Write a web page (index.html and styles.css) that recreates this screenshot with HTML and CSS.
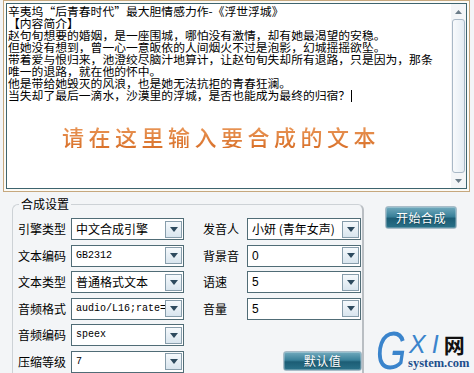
FILE: index.html
```html
<!DOCTYPE html>
<html lang="zh-CN">
<head>
<meta charset="utf-8">
<link rel="stylesheet" href="styles.css">
</head>
<body>
<div class="frame">
  <div class="editor">
    <div class="text">
      <div>辛夷坞“后青春时代”最大胆情感力作-《浮世浮城》</div>
      <div>【内容简介】</div>
      <div>赵句旬想要的婚姻，是一座围城，哪怕没有激情，却有她最渴望的安稳。</div>
      <div>但她没有想到，曾一心一意皈依的人间烟火不过是泡影，幻城摇摇欲坠。</div>
      <div>带着爱与恨归来，池澄绞尽脑汁地算计，让赵句旬失却所有退路，只是因为，那条</div>
      <div>唯一的退路，就在他的怀中。</div>
      <div>他是带给她毁灭的风浪，也是她无法抗拒的青春狂澜。</div>
      <div>当失却了最后一滴水，沙漠里的浮城，是否也能成为最终的归宿？<span class="caret"></span></div>
      <div class="hint">请在这里输入要合成的文本</div>
    </div>
    <div class="scroll">
      <div class="sb-btn"><svg width="7" height="4" viewBox="0 0 7 4"><path d="M0 4L3.5 0L7 4Z" fill="#6b7c88"/></svg></div>
      <div class="sb-thumb"></div>
      <div class="sb-btn"><svg width="7" height="4" viewBox="0 0 7 4"><path d="M0 0L3.5 4L7 0Z" fill="#6b7c88"/></svg></div>
    </div>
  </div>
</div>

<div class="lower">
  <fieldset class="group">
    <legend>合成设置</legend>
    <div class="grid">
      <div class="lbl">引擎类型</div>
      <div class="sel"><span class="v">中文合成引擎</span><span class="arr"><svg width="8" height="5" viewBox="0 0 8 5"><path d="M0 0L4 5L8 0Z" fill="#2d4a5e"/></svg></span></div>
      <div class="lbl c4">发音人</div>
      <div class="sel"><span class="v">小妍 (青年女声)</span><span class="arr"><svg width="8" height="5" viewBox="0 0 8 5"><path d="M0 0L4 5L8 0Z" fill="#2d4a5e"/></svg></span></div>

      <div class="lbl">文本编码</div>
      <div class="sel"><span class="v mono">GB2312</span><span class="arr"><svg width="8" height="5" viewBox="0 0 8 5"><path d="M0 0L4 5L8 0Z" fill="#2d4a5e"/></svg></span></div>
      <div class="lbl c4">背景音</div>
      <div class="sel"><span class="v num">0</span><span class="arr"><svg width="8" height="5" viewBox="0 0 8 5"><path d="M0 0L4 5L8 0Z" fill="#2d4a5e"/></svg></span></div>

      <div class="lbl">文本类型</div>
      <div class="sel"><span class="v">普通格式文本</span><span class="arr"><svg width="8" height="5" viewBox="0 0 8 5"><path d="M0 0L4 5L8 0Z" fill="#2d4a5e"/></svg></span></div>
      <div class="lbl c4">语速</div>
      <div class="sel"><span class="v num">5</span><span class="arr"><svg width="8" height="5" viewBox="0 0 8 5"><path d="M0 0L4 5L8 0Z" fill="#2d4a5e"/></svg></span></div>

      <div class="lbl">音频格式</div>
      <div class="sel"><span class="v mono">audio/L16;rate=16000</span><span class="arr"><svg width="8" height="5" viewBox="0 0 8 5"><path d="M0 0L4 5L8 0Z" fill="#2d4a5e"/></svg></span></div>
      <div class="lbl c4">音量</div>
      <div class="sel"><span class="v num">5</span><span class="arr"><svg width="8" height="5" viewBox="0 0 8 5"><path d="M0 0L4 5L8 0Z" fill="#2d4a5e"/></svg></span></div>

      <div class="lbl">音频编码</div>
      <div class="sel"><span class="v mono">speex</span><span class="arr"><svg width="8" height="5" viewBox="0 0 8 5"><path d="M0 0L4 5L8 0Z" fill="#2d4a5e"/></svg></span></div>

      <div class="lbl">压缩等级</div>
      <div class="sel"><span class="v mono">7</span><span class="arr"><svg width="8" height="5" viewBox="0 0 8 5"><path d="M0 0L4 5L8 0Z" fill="#2d4a5e"/></svg></span></div>
      <button class="btn reset">默认值</button>
    </div>
  </fieldset>
  <div class="side">
    <button class="btn start">开始合成</button>
    <div class="logo">
      <span class="g">G</span>
      <div class="lr">
        <div class="top"><span class="xi">X</span><span class="xi i">I</span><span class="wang">网</span></div>
        <div class="site">system.com</div>
      </div>
    </div>
  </div>
</div>
</body>
</html>
```
FILE: styles.css
```css
html, body {
  margin: 0;
  padding: 0;
}
body {
  width: 474px;
  height: 373px;
  overflow: hidden;
  background: #f3f5f7;
  font-family: "Noto Sans CJK SC", sans-serif;
  font-size: 12px;
  color: #000;
}

/* ---------- text editor ---------- */
.frame {
  margin: 0 4px 0 3px;
  height: 192px;
  box-sizing: border-box;
  border: 1px solid #c6a87e;
  padding: 2px;
  background: #fbfaf6;
}
.editor {
  display: flex;
  height: 100%;
  box-sizing: border-box;
  border: 1px solid #3d646e;
  background: #fff;
}
.text {
  flex: 1;
  padding: 1px 0 0 1px;
  font-size: 11.8px;
  line-height: 12px;
  white-space: nowrap;
  overflow: hidden;
}
.caret {
  display: inline-block;
  width: 1px;
  height: 12px;
  background: #000;
  vertical-align: -2px;
  margin-left: 1px;
}
.hint {
  margin: 22px 0 0 54px;
  font-size: 22px;
  line-height: 24px;
  letter-spacing: 4.5px;
  font-weight: 500;
  color: #e07c36;
  background: linear-gradient(#eb9a5c, #d9712a);
  -webkit-background-clip: text;
  background-clip: text;
  -webkit-text-fill-color: transparent;
  width: max-content;
}
.scroll {
  width: 15px;
  display: flex;
  flex-direction: column;
  background: #f3f5f7;
}
.sb-btn {
  height: 15px;
  display: flex;
  align-items: center;
  justify-content: center;
}
.sb-thumb {
  flex: 1;
  margin: 0 1px;
  border: 1px solid #a9b8c6;
  border-radius: 3px;
  background: linear-gradient(to right, #f8fafc, #e4ecf3);
}

/* ---------- settings ---------- */
.lower {
  display: flex;
  height: 181px;
}
.group {
  align-self: flex-start;
  margin: 5px 0 0 12px;
  padding: 7px 1px 0 5px;
  width: 343px;
  height: 175px;
  min-width: 0;
  border: 1px solid #cdd2d6;
  border-right: 2px solid #b9bec3;
  border-bottom: none;
  border-radius: 6px 6px 0 0;
}
.group legend {
  padding: 0 2px;
  margin-left: 1px;
  font-size: 12px;
  line-height: 14px;
}
.grid {
  display: grid;
  grid-template-columns: 53px 113px 19px 44px 114px;
  grid-auto-rows: 22px;
  row-gap: 4.6px;
  align-items: center;
}
.lbl {
  grid-column: 1;
  line-height: 22px;
  white-space: nowrap;
}
.lbl.c4 {
  grid-column: 4;
}
.sel {
  display: flex;
  align-items: center;
  height: 22px;
  box-sizing: border-box;
  border: 1px solid #506c76;
  background: #fff;
  padding: 0 1px 0 4px;
}
.sel .v {
  flex: 1;
  overflow: hidden;
  white-space: nowrap;
  line-height: 20px;
}
.mono {
  font-family: "Liberation Mono", monospace;
  font-size: 10px;
}
.num {
  font-family: "Liberation Sans", sans-serif;
  font-size: 12px;
}
.arr {
  flex: none;
  width: 17px;
  height: 17px;
  box-sizing: border-box;
  border: 1px solid #879dab;
  background: linear-gradient(#f5f9fc, #d9e5ee);
  display: flex;
  align-items: center;
  justify-content: center;
}
.btn {
  font-family: "Noto Sans CJK SC", sans-serif;
  font-size: 12px;
  color: #fff;
  padding: 0;
  border: 1px solid #a9bcc8;
  border-radius: 3px;
  background: linear-gradient(#72aabd 0%, #3a819a 45%, #1c5d75 55%, #2a7189 100%);
  box-shadow: inset 0 0 0 1px rgba(255, 255, 255, 0.25);
  text-shadow: 0 1px 1px rgba(0, 0, 0, 0.35);
  letter-spacing: 0.5px;
}
.reset {
  grid-column: 4 / 6;
  justify-self: end;
  align-self: start;
  width: 79px;
  height: 20px;
  line-height: 16px;
  margin-right: -1px;
}
.side {
  flex: 1;
  display: flex;
  flex-direction: column;
}
.start {
  width: 72px;
  height: 23px;
  margin: 14px 0 0 21px;
}

/* ---------- logo ---------- */
.logo {
  margin: auto 0 3px 12px;
  display: flex;
  align-items: flex-end;
}
.g {
  font-family: "Liberation Sans", sans-serif;
  font-style: italic;
  font-size: 54px;
  line-height: 40px;
  color: #3a84cc;
  transform: scaleX(0.72);
  transform-origin: left bottom;
  margin-right: -10px;
}
.lr {
  display: flex;
  flex-direction: column;
}
.top {
  display: flex;
  align-items: flex-end;
  height: 21px;
}
.xi {
  font-family: "Liberation Sans", sans-serif;
  font-style: italic;
  font-size: 25px;
  line-height: 21px;
  color: #3a84cc;
  margin-left: 1px;
}
.xi.i {
  margin-left: 6px;
}
.wang {
  font-size: 21px;
  line-height: 21px;
  font-weight: 700;
  color: #111;
  margin-left: 5px;
}
.site {
  font-family: "Liberation Serif", serif;
  font-weight: 700;
  font-size: 12.5px;
  line-height: 13px;
  color: #1d4f8c;
  margin-top: 2px;
}
```
